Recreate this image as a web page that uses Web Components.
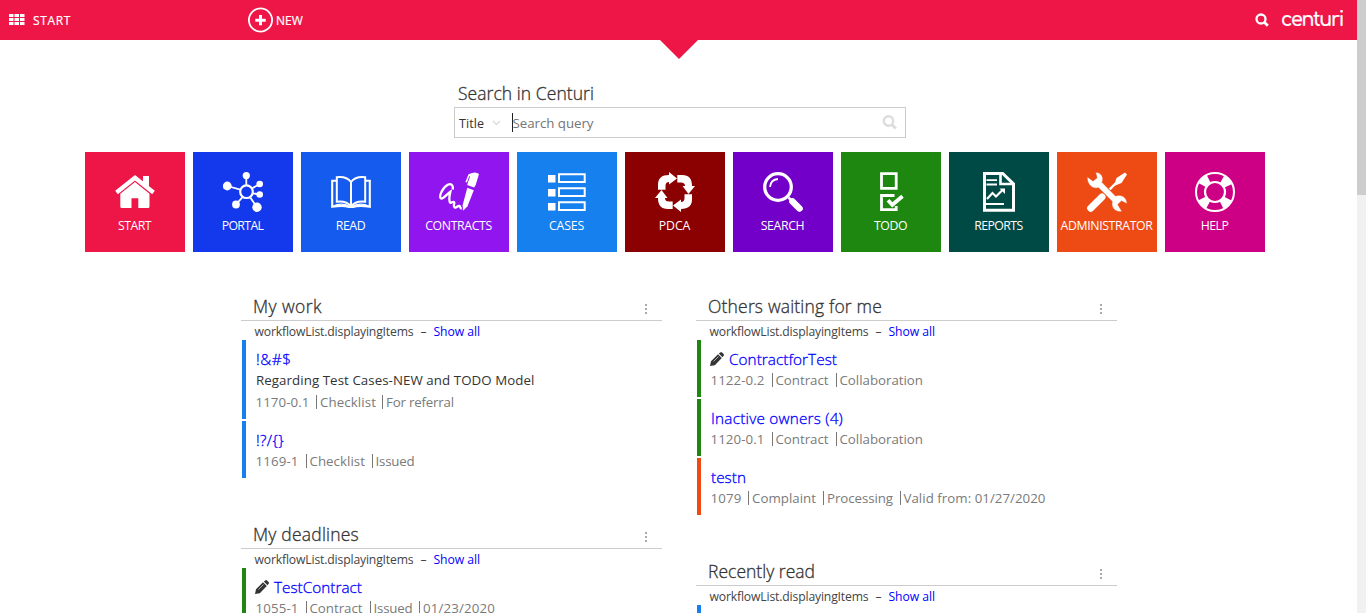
<!DOCTYPE html>
<html lang="en">
<head>
<meta charset="utf-8">
<title>Centuri</title>
<style>
html,body{margin:0;height:100%;overflow:hidden;background:#fff}
body{font-family:"Open Sans","Noto Sans",sans-serif;color:#444}
</style>
</head>
<body>
<centuri-app></centuri-app>
<script>
const define = (name, html, setup) => {
  const t = document.createElement('template');
  t.innerHTML = html;
  customElements.define(name, class extends HTMLElement {
    connectedCallback() {
      if (this.shadowRoot) return;
      const root = this.attachShadow({mode: 'open'});
      root.append(t.content.cloneNode(true));
      if (setup) setup(this, root);
    }
  });
};

/* Single line of text, tracked so that it fills the width given in "w". */
define('fit-text', `<style>:host{display:inline-block;white-space:pre}span{display:inline-block}</style><span><slot></slot></span>`,
  (el, root) => {
    const w = +el.getAttribute('w');
    const s = root.querySelector('span');
    const n = el.textContent.length;
    const natural = s.getBoundingClientRect().width;
    if (w && n) { s.style.letterSpacing = (w - natural) / n + 'px'; el.style.width = w + 'px'; }
  });

const ARROW = 'M3 17.700v-5q0-9.700 11-9.700V0l8 6.500-8 6V10q-3.500 0-3.500 4v3.700z';
const ICONS = {
  home: `<path d="M28 4h6v11l-6-5z"/><path d="M1.500 20.500 20 5.800l18.500 14.700" fill="none" stroke="#fff" stroke-width="4.200"/><path d="M5.300 21.800 20 10l14.500 11.800V34.500q0 1.500-1.500 1.500H23.300V26.300h-6.800V36H6.800q-1.500 0-1.500-1.500z"/>`,
  portal: `<g stroke="#fff" stroke-width="1.800" fill="none"><circle cx="23.500" cy="19.700" r="6.300" stroke-width="2.200"/><path d="M23.300 4v9M4.300 14l13 3.700M36.700 12l-7.500 4.300M36.700 22.500l-6.700-1.200M13 32.500l6.500-7.300M34 35.300l-6.700-9.800"/></g><circle cx="23.300" cy="3.600" r="3.600"/><circle cx="4.300" cy="14" r="4.400"/><circle cx="36.700" cy="12" r="3.300"/><circle cx="36.700" cy="22.500" r="3.300"/><circle cx="13" cy="32.500" r="3.900"/><circle cx="34" cy="35.300" r="4.700"/>`,
  book: `<g fill="none" stroke="#fff" stroke-width="2"><path d="M20 10C16.500 5.500 11 4.500 5.800 5.200v24.500C11 29 16.500 30 20 34.500c3.500-4.500 9-5.500 14.200-4.800V5.200C29 4.500 23.500 5.500 20 10v24.500"/><path d="M5.800 8.800H1.200v26c7-1.300 12-1.500 16.800.2h4c4.800-1.700 9.800-1.500 16.800-.2v-26h-4.600" stroke-width="2.100"/><path d="M1.500 34.500C8 31 15 32 20 35c5-3 12-4 18.500-.5" stroke-width="1.300"/></g>`,
  contract: `<path d="M13.700 17.500c.8-4-1.400-6.600-4.900-4.800C3.500 15.500-.2 24 1.800 26.300c1.500 1.700 6-4 9.600-6.600-1 4-1.600 8-.5 10.600.8 1.800 3.200-1.500 4.200-.2.900 1.400-1.400 4 .6 5.300 1.700 1 2.800-1.900 4.600-1.500 1.200.3.500 2.500 2.500 2.600" fill="none" stroke="#fff" stroke-width="2.300"/><path d="M33 1q4-1.500 7 1L36.700 13l-1.600 2.500-7-2.500L31 4.500l-.8-.2L28 10.500l-1.600-.6L29.500 2.300z"/><path d="m28.300 15.800 6.500 2.400-6.300 16-4.400 4.500-.5-5.500z"/>`,
  cases: `<path d="M1 3h7.500v7.500H1zm0 14h7.500v7.500H1zm0 14h7.500v7.500H1z"/><path d="M12 2.300h25.700v7.700H12zm0 14h25.700v7.700H12zm0 14h25.700v7.700H12z" fill="none" stroke="#fff" stroke-width="2"/>`,
  cycle: [0, 90, 180, 270].map(a => `<path transform="rotate(${a} 20 20)" d="${ARROW}"/>`).join(''),
  search: `<g fill="none" stroke="#fff"><circle cx="15" cy="15" r="13.300" stroke-width="3.300"/><path d="M7 15q.7-7.300 8-8" stroke-width="1.800"/><path d="m25.500 25.500 3 3" stroke-width="2.500"/><path d="m29.500 29.500 7 7" stroke-width="6.600" stroke-linecap="round"/></g>`,
  todo: `<g fill="none" stroke="#fff" stroke-width="2.800"><path d="M10.500 1.700h14.700v14.700H10.500z"/><path d="M23.500 23.500h-13V37.700h14.700V34"/><path d="m17 28.300 4.300 4.500 10.200-8.500" stroke-width="3.800"/></g>`,
  report: `<g fill="none" stroke="#fff" stroke-width="3"><path d="M5.500 1.500h18.200L34.500 12v26.300h-29z"/><path d="M21.500 2v10h12.500" stroke-width="2.600"/><path d="M7.500 8.200h10.500M7.500 12.500h10.500M7 32h18" stroke-width="1.800"/><path d="m8 27 5.500-6 3.500 3.500 7-7" stroke-width="2.200"/></g><path d="M20.500 16.500H26V22z"/>`,
  tools: `<path d="m28.500 11.500-5.800 5.800" stroke="#fff" stroke-width="2.400"/><path d="M27 13.500 29.500 6 38 .5l2 2-5.500 8.500-7.500 3z"/><path d="M3.700 36.300 15 25" stroke="#fff" stroke-width="7" stroke-linecap="round"/><path d="M.3 4.800 6 9l4-3.200L8.500.2C14 0 17.500 5.500 15 10.300L28.500 24c6-2.500 11.800 2 11.500 7.800L34.500 29 30.800 32.500 35 39.500c-6 1.500-11.500-3.500-9.800-10L11.500 15.800C5.500 18-.7 11.500.3 4.800z" stroke="var(--tile)" stroke-width=".6"/>`,
  help: `<g fill="none" stroke="#fff"><circle cx="20" cy="20" r="19" stroke-width="2"/><circle cx="20" cy="20" r="10" stroke-width="2.200"/><circle cx="20" cy="20" r="14.700" stroke-width="8.500" stroke-dasharray="9 14.090" stroke-dashoffset="-7.050"/></g>`
};

define('app-tile', `<style>
:host{display:flex;flex-direction:column;align-items:center;width:100px;height:100px;box-sizing:border-box;padding-top:20px;background:var(--tile);color:#fff}
svg{display:block;width:40px;height:40px;fill:#fff}
.label{height:28px;line-height:28px;font-size:12.300px;white-space:nowrap;margin-left:-1px}
</style><svg viewBox="0 0 40 40"></svg><div class="label"></div>`,
  (el, root) => {
    el.style.setProperty('--tile', el.getAttribute('color'));
    root.querySelector('svg').innerHTML = ICONS[el.getAttribute('icon')];
    root.querySelector('.label').innerHTML = `<fit-text w="${el.getAttribute('w')}">${el.getAttribute('label')}</fit-text>`;
  });

define('app-header', `<style>
:host{display:flex;align-items:center;height:40px;background:#ee1547;color:#fff;position:relative;font-size:12px;font-weight:500;box-sizing:border-box;padding:0 14px 0 9px;-webkit-text-stroke:.2px #fff}
svg{display:block}
.start{display:flex;align-items:center;gap:8px;width:239px}
.new{display:flex;align-items:center;gap:3px;flex:1}
.logo{font:600 19px/26px "Comfortaa","Lato",sans-serif;margin-left:12px;height:26px}
.notch{position:absolute;left:660px;top:40px}
</style>
<div class="start"><svg width="16" height="12" fill="#fff"><path d="M0 0h4.500v3H0zM5.500 0H10v3H5.500zM11 0h4.500v3H11zM0 4h4.500v3H0zM5.500 4H10v3H5.500zM11 4h4.500v3H11zM0 8h4.500v3H0zM5.500 8H10v3H5.500zM11 8h4.500v3H11z"/></svg><fit-text w="38">START</fit-text></div>
<div class="new"><svg width="25" height="26"><circle cx="12.500" cy="13" r="11.600" fill="none" stroke="#fff" stroke-width="1.800"/><path d="M12.500 8v10.300M7.300 13.200h10.400" stroke="#fff" stroke-width="3"/></svg><fit-text w="27">NEW</fit-text></div>
<svg width="14" height="14" fill="none" stroke="#fff"><circle cx="6" cy="6" r="4.500" stroke-width="2.300"/><path d="m9.300 9.300 3.500 3.500" stroke-width="2.800"/></svg>
<div class="logo"><fit-text w="62">centuri</fit-text></div>
<svg class="notch" width="38" height="19"><path d="M0 0h38L19 19z" fill="#ee1547"/></svg>`);

define('search-box', `<style>
:host{display:block;width:452px}
.title{height:27px;line-height:26.500px;font-size:17.500px;font-weight:300;-webkit-text-stroke:.3px #333;padding-left:4px;color:#333}
.box{display:flex;align-items:center;box-sizing:border-box;height:31px;border:1px solid #ccc;padding:0 8px 0 4px;font-size:13.300px;color:#757575}
.kind{color:#333;width:33px;font-size:12.500px;line-height:20px;padding-top:2px}
.caret{width:1px;height:19px;background:#222;margin-left:11px}
.query{flex:1;margin-left:-.5px}
svg{display:block;fill:none}
</style><div class="title"><fit-text w="136">Search in Centuri</fit-text></div>
<div class="box"><div class="kind"><fit-text w="25">Title</fit-text></div><svg width="9" height="6"><path d="m1 1 3.500 3.500L8 1" stroke="#ddd" stroke-width="1.500"/></svg><span class="caret"></span><div class="query"><fit-text w="81">Search query</fit-text></div><svg width="15" height="15" stroke="#ddd"><circle cx="6.500" cy="6" r="4.700" stroke-width="2.400"/><path d="m9.800 9.500 4 4" stroke-width="3"/></svg></div>`);

const PENCIL = `<svg width="14" height="14" viewBox="0 0 14 14" fill="#333"><path d="m0 14 1-4.800L8 2.200 11.800 6l-7 7.200zM8.800 1.500l1.500-1.100q.8-.7 1.700.1l1.600 1.600q.8.900 0 1.600L12.500 5.200z"/><path d="m3.500 9.500 5-5" stroke="#fff" stroke-width=".6"/></svg>`;

define('work-item', `<style>
:host{display:block;box-sizing:border-box;border-left:4px solid var(--bar);padding:9px 0 6px 10px;margin:0 0 2px 1px}
.title{display:flex;align-items:center;gap:5px;height:20px;line-height:20px;font-size:15.300px;font-weight:300;-webkit-text-stroke:.3px #00f;color:#00f}
.title svg{display:block;margin-left:-1px}
.meta{font-size:13.300px;height:22px;line-height:22px;display:flex;align-items:center;color:#7a7a7a;margin-left:-.5px}
.meta i{width:1px;height:14px;background:#777}
</style><div class="title"></div><slot name="desc"></slot><div class="meta"></div>`,
  (el, root) => {
    const [t, tw] = el.getAttribute('title-text').split('|');
    root.querySelector('.title').innerHTML = (el.hasAttribute('pencil') ? PENCIL : '') + `<fit-text w="${tw}">${t}</fit-text>`;
    el.style.setProperty('--bar', el.getAttribute('bar'));
    let x = 0;
    /* meta entries: text|left offset|width; a rule sits before each later entry */
    root.querySelector('.meta').innerHTML = el.getAttribute('meta').split(';').map((m, i) => {
      const [s, l, w] = m.split('|');
      const gap = l - x; x = +l + +w;
      return (i ? `<i style="margin-left:${gap - 4}px;margin-right:3px"></i>` : '') + `<fit-text w="${w}">${s}</fit-text>`;
    }).join('');
  });

define('work-panel', `<style>
:host{display:block;width:421px;margin-bottom:42px}
.head{display:flex;justify-content:space-between;height:28px;line-height:28.500px;border-bottom:1px solid #ccc;padding:0 14px 0 12px;font-size:17.500px;font-weight:300;color:#333}
.h{-webkit-text-stroke:.3px #333}
.head svg{display:block;margin-top:11px}
.sub{height:19px;line-height:21px;font-size:12.200px;padding-left:13.500px;display:flex}
a{color:#00f}
.dash{width:20px;text-align:center}
</style><div class="head"><span class="h"></span><svg width="4" height="12" fill="#aaa"><path d="M1 1h2v2H1zM1 5h2v2H1zM1 9h2v2H1z"/></svg></div>
<div class="sub"><fit-text w="159">workflowList.displayingItems</fit-text><span class="dash">–</span><a><fit-text w="46.500">Show all</fit-text></a></div><slot></slot>`,
  (el, root) => { root.querySelector('.h').innerHTML = `<fit-text w="${el.getAttribute('w')}">${el.getAttribute('heading')}</fit-text>`; });

define('page-scrollbar', `<style>:host{display:block;width:9px;background:#f1f1f1}div{height:195px;background:#cdcdcd}</style><div></div>`);

define('centuri-app', `<style>
:host{display:flex;height:613px;overflow:hidden}
main{width:1357px}
search-box{margin:40px 0 0 454px}
nav{display:flex;gap:8px;margin:14px 0 0 85px}
.cols{display:grid;grid-template-columns:421px 421px;gap:34px;margin:40px 0 0 241px}
.desc{font-size:13.300px;line-height:22px;height:22px;color:#333}
</style>
<main><app-header></app-header><search-box></search-box>
<nav>
<app-tile icon="home" color="#ee1547" label="START" w="33"></app-tile>
<app-tile icon="portal" color="#1438ec" label="PORTAL" w="41.500"></app-tile>
<app-tile icon="book" color="#155bee" label="READ" w="29.500"></app-tile>
<app-tile icon="contract" color="#9115ee" label="CONTRACTS" w="66.500"></app-tile>
<app-tile icon="cases" color="#1580ee" label="CASES" w="35"></app-tile>
<app-tile icon="cycle" color="#8b0000" label="PDCA" w="31.500"></app-tile>
<app-tile icon="search" color="#7300c8" label="SEARCH" w="43.500"></app-tile>
<app-tile icon="todo" color="#1e870f" label="TODO" w="33"></app-tile>
<app-tile icon="report" color="#004a45" label="REPORTS" w="48.500"></app-tile>
<app-tile icon="tools" color="#ee4a13" label="ADMINISTRATOR" w="92"></app-tile>
<app-tile icon="help" color="#cd0085" label="HELP" w="27.500"></app-tile>
</nav>
<div class="cols">
<div>
<work-panel heading="My work" w="69">
<work-item bar="#1580ee" title-text="!&amp;amp;#$|35.500" meta="1170-0.1|0|54;Checklist|64.500|56;For referral|130.500|68"><div class="desc" slot="desc"><fit-text w="278.500">Regarding Test Cases-NEW and TODO Model</fit-text></div></work-item>
<work-item bar="#1580ee" title-text="!?/{}|28" meta="1169-1|0|43;Checklist|54|55.500;Issued|120|39"></work-item>
</work-panel>
<work-panel heading="My deadlines" w="106">
<work-item bar="#1e870f" pencil title-text="TestContract|88" meta="1055-1|0|43;Contract|54|53;Issued|118|39;01/23/2020|167.500|72"></work-item>
</work-panel>
</div>
<div>
<work-panel heading="Others waiting for me" w="174">
<work-item bar="#1e870f" pencil title-text="ContractforTest|108" meta="1122-0.2|0|54;Contract|65|53;Collaboration|129|83.500"></work-item>
<work-item bar="#1e870f" title-text="Inactive owners (4)|132" meta="1120-0.1|0|54;Contract|65|53;Collaboration|129|83.500"></work-item>
<work-item bar="#ee4a13" title-text="testn|35" meta="1079|0|31;Complaint|41.500|64;Processing|116.500|66;Valid from: 01/27/2020|193|142"></work-item>
</work-panel>
<work-panel heading="Recently read" w="107">
<work-item bar="#1580ee" title-text="|0" meta="|0|0"></work-item>
</work-panel>
</div>
</div>
</main><page-scrollbar></page-scrollbar>`);
</script>
</body>
</html>
